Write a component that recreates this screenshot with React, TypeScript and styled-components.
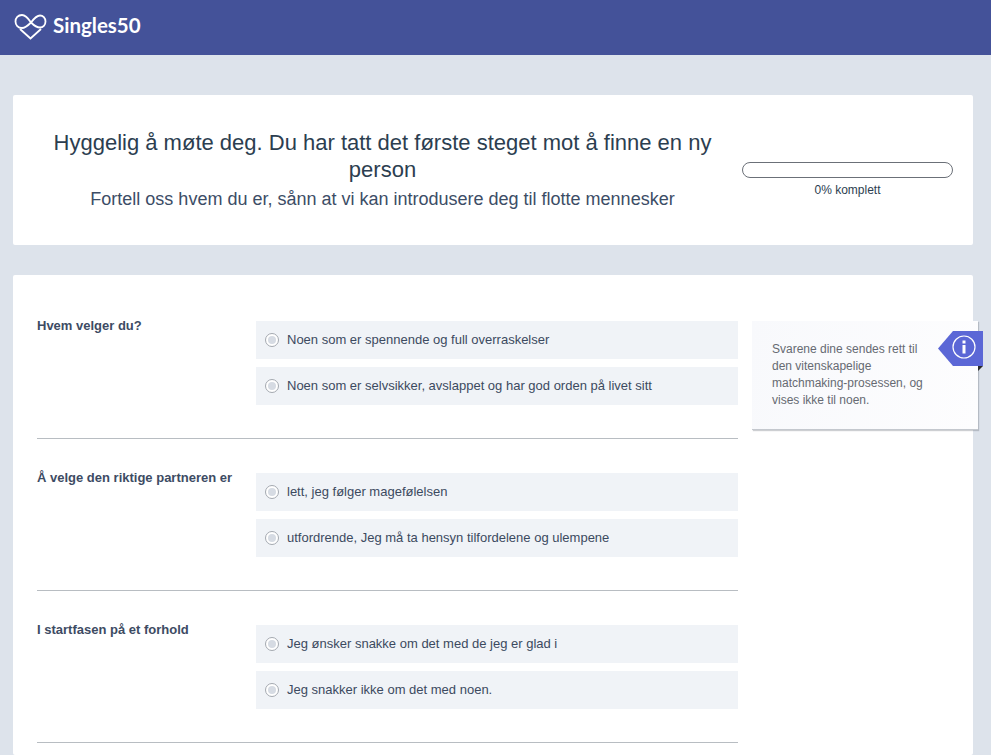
import React from 'react';
import styled, { createGlobalStyle } from 'styled-components';

const GlobalStyle = createGlobalStyle`
  html, body {
    margin: 0;
    padding: 0;
    height: 755px;
    overflow: hidden;
    background: #dde3eb;
    font-family: "Liberation Sans", Arial, sans-serif;
  }
`;

const Header = styled.header`
  height: 55px;
  background: #445299;
  display: flex;
  align-items: center;
  padding-left: 14px;
  gap: 6px;
`;

const Logo = styled.svg`
  margin-top: -3px;
`;

const LogoText = styled.span`
  font-family: Lato, sans-serif;
  font-size: 20.5px;
  font-weight: 700;
  color: #ffffff;
  margin-top: -5px;
`;

const Main = styled.main`
  padding: 40px 18px 0 13px;
  display: flex;
  flex-direction: column;
  gap: 30px;
`;

const IntroCard = styled.section`
  height: 150px;
  background: #ffffff;
  border-radius: 2px;
  display: flex;
  align-items: center;
  box-sizing: border-box;
  padding: 0 20px 0 26px;
`;

const IntroText = styled.div`
  width: 687px;
  text-align: center;
  color: #2c3e50;
`;

const Title = styled.h1`
  margin: 0 0 4px;
  font-size: 22px;
  font-weight: 400;
  line-height: 27px;
`;

const Subtitle = styled.p`
  margin: 0;
  font-size: 18px;
  line-height: 24px;
  color: #3c4d66;
`;

const Progress = styled.div`
  margin: 19px 0 0 16px;
  width: 211px;
  text-align: center;
`;

const ProgressBar = styled.div`
  height: 16px;
  border: 1px solid #6b7078;
  border-radius: 8px;
  box-sizing: border-box;
`;

const ProgressLabel = styled.div`
  margin-top: 5px;
  font-size: 12px;
  line-height: 14px;
  color: #2c3e50;
`;

const FormCard = styled.section`
  background: #ffffff;
  border-radius: 2px;
  padding: 46px 0 0 24px;
  box-sizing: border-box;
  height: 480px;
  display: flex;
  align-items: flex-start;
  gap: 14px;
`;

const Questions = styled.div`
  width: 701px;
  flex-shrink: 0;
  display: flex;
  flex-direction: column;
  gap: 34px;
`;

const Question = styled.div`
  display: flex;
  padding-bottom: 33px;
  border-bottom: 1px solid #b8bdc2;
`;

const QuestionLabel = styled.div`
  width: 219px;
  flex-shrink: 0;
  margin-top: -3px;
  font-size: 13px;
  line-height: 15px;
  font-weight: 700;
  color: #3d4b63;
`;

const Options = styled.div`
  flex: 1;
  display: flex;
  flex-direction: column;
  gap: 8px;
`;

const Option = styled.label`
  height: 38px;
  background: #f0f3f7;
  display: flex;
  align-items: center;
  padding-left: 9px;
  gap: 8px;
  font-size: 13px;
  line-height: 13px;
  color: #3c4a60;
`;

const OptionText = styled.span`
  margin-top: -2px;
`;

const Radio = styled.span`
  width: 14px;
  height: 14px;
  box-sizing: border-box;
  border: 1px solid #a4a9b0;
  border-radius: 50%;
  background: #ffffff;
  display: flex;
  align-items: center;
  justify-content: center;

  &::after {
    content: '';
    width: 8px;
    height: 8px;
    border-radius: 50%;
    background: #d6dbe3;
  }
`;

const Tip = styled.aside`
  position: relative;
  width: 226px;
  height: 109px;
  flex-shrink: 0;
  box-sizing: border-box;
  padding: 20px 48px 0 20px;
  background: linear-gradient(100deg, #f8f9fc 0%, #fdfdfe 100%);
  border-bottom: 1px solid #c4c8ce;
  box-shadow: 1px 1px 1px rgba(90, 95, 105, 0.3);
  font-size: 12px;
  line-height: 17px;
  color: #666a72;
`;

const TipBadge = styled.svg`
  position: absolute;
  top: 10px;
  right: -5px;
`;

const questions = [
  {
    label: 'Hvem velger du?',
    options: [
      'Noen som er spennende og full overraskelser',
      'Noen som er selvsikker, avslappet og har god orden på livet sitt',
    ],
  },
  {
    label: 'Å velge den riktige partneren er',
    options: [
      'lett, jeg følger magefølelsen',
      'utfordrende, Jeg må ta hensyn tilfordelene og ulempene',
    ],
  },
  {
    label: 'I startfasen på et forhold',
    options: [
      'Jeg ønsker snakke om det med de jeg er glad i',
      'Jeg snakker ikke om det med noen.',
    ],
  },
];

const App: React.FC = () => {
  return (
    <>
      <GlobalStyle />
      <Header>
        <Logo width="33" height="27" viewBox="0 0 33 27" fill="none" stroke="#ffffff" strokeWidth="1.8">
          <path d="M17 9.5 C14 5 11 2 8 2 C4 2 1.5 5 1.5 8.5 C1.5 12 4 15 8 15 C11 15 14 12.5 17 9.5 C20 5.5 22.5 2.5 26 2.5 C29 2.5 31.5 5 31.5 8.5 C31.5 12 29 14.5 26 14.5 C22.5 14.5 20 12.5 17 9.5" />
          <path d="M6 16 L16.5 25.5 L27 16" />
        </Logo>
        <LogoText>Singles50</LogoText>
      </Header>
      <Main>
        <IntroCard>
          <IntroText>
            <Title>Hyggelig å møte deg. Du har tatt det første steget mot å finne en ny person</Title>
            <Subtitle>Fortell oss hvem du er, sånn at vi kan introdusere deg til flotte mennesker</Subtitle>
          </IntroText>
          <Progress>
            <ProgressBar />
            <ProgressLabel>0% komplett</ProgressLabel>
          </Progress>
        </IntroCard>
        <FormCard>
          <Questions>
            {questions.map((q) => (
              <Question key={q.label}>
                <QuestionLabel>{q.label}</QuestionLabel>
                <Options>
                  {q.options.map((o) => (
                    <Option key={o}>
                      <Radio />
                      <OptionText>{o}</OptionText>
                    </Option>
                  ))}
                </Options>
              </Question>
            ))}
          </Questions>
          <Tip>
            Svarene dine sendes rett til den vitenskapelige matchmaking-prosessen, og vises ikke til noen.
            <TipBadge width="45" height="40" viewBox="0 0 45 40">
              <path d="M0 17.5 L15 0 H45 V35 H15 Z" fill="#5b67d6" />
              <path d="M40 35 H45 L40 40 Z" fill="#2a2a2a" />
              <circle cx="26" cy="16" r="11" fill="none" stroke="#ffffff" strokeWidth="1.2" />
              <rect x="24.5" y="9.5" width="3" height="3" fill="#ffffff" />
              <rect x="24.5" y="14" width="3" height="8.5" fill="#ffffff" />
            </TipBadge>
          </Tip>
        </FormCard>
      </Main>
    </>
  );
};

export default App;
